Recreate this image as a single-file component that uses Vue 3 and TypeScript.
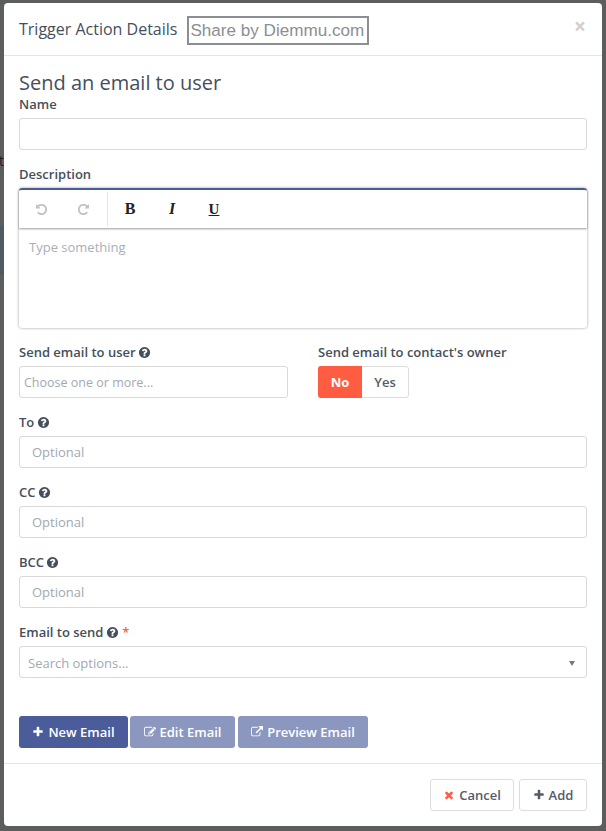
<script setup lang="ts">
const optional: string[] = ['To', 'CC', 'BCC']
const Q = 'M1024 1376v-192q0-14-9-23t-23-9h-192q-14 0-23 9t-9 23v192q0 14 9 23t23 9h192q14 0 23-9t9-23zm256-672q0-88-55.5-163t-138.5-116-170-41q-243 0-371 213-15 24 8 42l132 100q7 6 19 6 16 0 25-12 53-68 86-92 34-24 86-24 48 0 85.5 26t37.5 59q0 38-20 61t-68 45q-63 28-115.5 86.5t-52.5 125.5v36q0 14 9 23t23 9h192q14 0 23-9t9-23q0-19 21.5-49.5t54.5-49.5q32-18 49-28.5t46-35 44.5-48 28-60.5 12.5-81zm384 192q0 209-103 385.5t-279.5 279.5-385.5 103-385.5-103-279.5-279.5-103-385.5 103-385.5 279.5-279.5 385.5-103 385.5 103 279.5 279.5 103 385.5z'
const PLUS = 'M1600 736v192q0 40-28 68t-68 28h-416v416q0 40-28 68t-68 28h-192q-40 0-68-28t-28-68v-416h-416q-40 0-68-28t-28-68v-192q0-40 28-68t68-28h416v-416q0-40 28-68t68-28h192q40 0 68 28t28 68v416h416q40 0 68 28t28 68z'
const TIMES = 'M1490 1322q0 40-28 68l-136 136q-28 28-68 28t-68-28l-294-294-294 294q-28 28-68 28t-68-28l-136-136q-28-28-28-68t28-68l294-294-294-294q-28-28-28-68t28-68l136-136q28-28 68-28t68 28l294 294 294-294q28-28 68-28t68 28l136 136q28 28 28 68t-28 68l-294 294 294 294q28 28 28 68z'
const EDIT = 'M888 1184l116-116-152-152-116 116v56h96v96h56zm440-720q-16-16-33 1l-350 350q-17 17-1 33t33-1l350-350q17-17 1-33zm80 594v190q0 119-84.5 203.5t-203.5 84.5h-832q-119 0-203.5-84.5t-84.5-203.5v-832q0-119 84.5-203.5t203.5-84.5h832q63 0 117 25 15 7 18 23 3 17-9 29l-49 49q-14 14-32 8-23-6-45-6h-832q-66 0-113 47t-47 113v832q0 66 47 113t113 47h832q66 0 113-47t47-113v-126q0-13 9-22l64-64q15-15 35-7t20 29zm-96-738l288 288-672 672h-288v-288zm444 132l-92 92-288-288 92-92q28-28 68-28t68 28l152 152q28 28 28 68t-28 68z'
const LINK = 'M1408 928v320q0 119-84.5 203.5t-203.5 84.5h-832q-119 0-203.5-84.5t-84.5-203.5v-832q0-119 84.5-203.5t203.5-84.5h704q14 0 23 9t9 23v64q0 14-9 23t-23 9h-704q-66 0-113 47t-47 113v832q0 66 47 113t113 47h832q66 0 113-47t47-113v-320q0-14 9-23t23-9h64q14 0 23 9t9 23zm384-864v512q0 26-19 45t-45 19-45-19l-176-176-652 652q-10 10-23 10t-23-10l-114-114q-10-10-10-23t10-23l652-652-176-176q-19-19-19-45t19-45 45-19h512q26 0 45 19t19 45z'
const UNDO = 'M1664 896q0 156-61 298t-164 245-245 164-298 61q-172 0-327-72.5t-264-204.5q-7-10-6.5-22.5t8.5-20.5l137-138q10-9 25-9 16 2 23 12 73 95 179 147t225 52q104 0 198.5-40.5t163.5-109.5 109.5-163.5 40.5-198.5-40.5-198.5-109.5-163.5-163.5-109.5-198.5-40.5q-98 0-188 35.5t-160 101.5l137 138q31 30 14 69-17 40-59 40h-448q-26 0-45-19t-19-45v-448q0-42 40-59 39-17 69 14l130 129q107-101 244.5-156.5t284.5-55.5q156 0 298 61t245 164 164 245 61 298z'
</script>

<template>
  <div class="backdrop">
    <span class="under-text">t</span>
    <span class="under-band"></span>
    <section class="modal">
      <header class="head">
        <h2 class="head-title">Trigger Action Details</h2>
        <span class="share">Share by Diemmu.com</span>
        <span class="close">×</span>
      </header>

      <div class="body">
        <h3 class="title">Send an email to user</h3>

        <div class="field-name">
          <label class="lbl">Name</label>
          <div class="input"></div>
        </div>

        <div class="field-desc">
          <label class="lbl">Description</label>
          <div class="editor">
            <div class="toolbar">
              <div class="tool-group">
                <button class="tool"><svg class="t-ic" viewBox="0 0 1792 1792"><path :d="UNDO" /></svg></button>
                <button class="tool"><svg class="t-ic flip" viewBox="0 0 1792 1792"><path :d="UNDO" /></svg></button>
              </div>
              <div class="tool-group fmt">
                <button class="tool txt">B</button>
                <button class="tool txt it">I</button>
                <button class="tool txt un">U</button>
              </div>
            </div>
            <div class="editor-area">Type something</div>
          </div>
        </div>

        <div class="two-col">
          <div class="col-left">
            <label class="lbl">Send email to user <svg class="q" viewBox="0 0 1792 1792"><path :d="Q" /></svg></label>
            <div class="input ph small">Choose one or more...</div>
          </div>
          <div class="col-right">
            <label class="lbl">Send email to contact's owner</label>
            <div class="toggle">
              <span class="tg-no">No</span>
              <span class="tg-yes">Yes</span>
            </div>
          </div>
        </div>

        <div v-for="o in optional" :key="o" class="field-opt">
          <label class="lbl">{{ o }} <svg class="q" viewBox="0 0 1792 1792"><path :d="Q" /></svg></label>
          <div class="input ph">Optional</div>
        </div>

        <div class="field-opt">
          <label class="lbl">Email to send <svg class="q" viewBox="0 0 1792 1792"><path :d="Q" /></svg> <span class="req">*</span></label>
          <div class="input ph select">
            <span>Search options...</span>
            <i class="caret"></i>
          </div>
        </div>

        <div class="actions">
          <button class="btn primary"><svg class="b-ic" viewBox="0 0 1792 1792"><path :d="PLUS" /></svg>New Email</button>
          <button class="btn muted edit"><svg class="b-ic" viewBox="0 0 1792 1792"><path :d="EDIT" /></svg>Edit Email</button>
          <button class="btn muted preview"><svg class="b-ic" viewBox="0 0 1792 1792"><path :d="LINK" /></svg>Preview Email</button>
        </div>
      </div>

      <footer class="foot">
        <button class="btn ghost cancel"><svg class="b-ic red" viewBox="0 0 1792 1792"><path :d="TIMES" /></svg>Cancel</button>
        <button class="btn ghost add"><svg class="b-ic" viewBox="0 0 1792 1792"><path :d="PLUS" /></svg>Add</button>
      </footer>
    </section>
  </div>
</template>

<style>
html, body { margin: 0; padding: 0; background: #5c5d5f; }
</style>

<style scoped>
* { box-sizing: border-box; }
.backdrop {
  position: relative;
  width: 606px;
  height: 831px;
  padding: 3px 4px 5px;
  background: #5c5d5f;
  font-family: "Open Sans", sans-serif;
  color: #454f5b;
  overflow: hidden;
}
.under-text {
  position: absolute;
  left: -1px;
  top: 152px;
  font-size: 14px;
  line-height: 18px;
  color: #222;
}
.under-band {
  position: absolute;
  left: 0;
  top: 226px;
  width: 4px;
  height: 49px;
  background: #4f5a62;
}
.modal {
  position: relative;
  width: 598px;
  height: 823px;
  background: #fff;
  border-radius: 4px;
  display: flex;
  flex-direction: column;
}
.head {
  height: 53px;
  flex: none;
  border-bottom: 1px solid #e5e5e5;
  display: flex;
  align-items: flex-start;
  padding: 13px 15px 0;
}
.head-title {
  margin: 0;
  font-size: 16px;
  font-weight: 400;
  line-height: 26px;
  color: #454f5b;
}
.share {
  margin-left: 10px;
  width: 182px;
  height: 29px;
  border: 2px solid #8b8e92;
  font-family: "Liberation Sans", sans-serif;
  font-size: 17.1px;
  line-height: 26px;
  padding-left: 1px;
  color: #8b8e92;
  white-space: nowrap;
}
.close {
  margin-left: auto;
  margin-top: -3px;
  font-size: 21px;
  line-height: 26px;
  font-weight: 700;
  color: #cfcfcf;
  padding-right: 1px;
}
.body {
  flex: 1;
  padding: 15px 15px 0;
  display: flex;
  flex-direction: column;
}
.title {
  margin: 0 0 3px;
  font-size: 20px;
  font-weight: 400;
  line-height: 24px;
  color: #454f5b;
}
.lbl {
  display: block;
  font-size: 13px;
  font-weight: 600;
  line-height: 14px;
  margin: -1px 0 7px;
  color: #454f5b;
  white-space: nowrap;
}
.input {
  height: 32px;
  border: 1px solid #d9d9d9;
  border-radius: 3px;
  background: #fff;
}
.field-desc { margin-top: 18px; }
.editor {
  height: 140px;
  border-top: 2px solid #4a5d9a;
  border-radius: 3px;
  box-shadow: 0 0 3px rgba(0, 0, 0, 0.4);
  display: flex;
  flex-direction: column;
}
.toolbar {
  height: 38px;
  flex: none;
  display: flex;
  box-shadow: 0 1px 2px rgba(0, 0, 0, 0.4);
}
.tool-group { display: flex; height: 34px; margin-top: 2px; border-right: 1px solid #e4e4e4; padding: 0 3px 0 1px; }
.tool-group.fmt { border-right: 0; padding: 0 0 0 1px; }
.tool {
  width: 42px;
  height: 34px;
  border: 0;
  background: none;
  padding: 0;
  display: flex;
  align-items: center;
  justify-content: center;
}
.t-ic { width: 13px; height: 13px; fill: #c2c2c2; }
.flip { transform: scaleX(-1); }
.txt {
  font-family: "Liberation Serif", serif;
  font-size: 16px;
  font-weight: 700;
  color: #222;
}
.it { font-style: italic; }
.un { text-decoration: underline; font-size: 15px; }
.editor-area {
  flex: 1;
  padding: 10px 10px;
  font-size: 13px;
  line-height: 18px;
  color: #a7afbb;
}
.two-col { display: flex; margin-top: 18px; }
.col-left { width: 269px; }
.col-right { margin-left: 30px; }
.ph {
  font-size: 13px;
  line-height: 30px;
  padding-left: 12px;
  color: #a2a9b1;
}
.small { padding-left: 4px; font-size: 12.5px; line-height: 32px; }
.toggle {
  display: flex;
  width: 91px;
  height: 32px;
  border: 1px solid #ddd;
  border-radius: 3px;
  font-size: 13px;
  font-weight: 600;
  line-height: 30px;
  text-align: center;
}
.tg-no {
  width: 44px;
  margin: -1px 0 -1px -1px;
  line-height: 32px;
  background: #ff5c42;
  color: #fff;
  border-radius: 3px 0 0 3px;
  font-weight: 700;
}
.tg-yes { flex: 1; color: #555c68; }
.field-opt { margin-top: 18px; }
.q { width: 13px; height: 13px; margin-left: -1px; fill: #454f5b; vertical-align: -2px; }
.req { color: #ff5c42; }
.select {
  display: flex;
  align-items: center;
  justify-content: space-between;
  padding: 2px 11px 0 8px;
}
.caret {
  width: 0;
  height: 0;
  border-left: 3.5px solid transparent;
  border-right: 3.5px solid transparent;
  border-top: 5px solid #777;
}
.actions { display: flex; margin-top: 38px; }
.btn {
  height: 32px;
  border: 0;
  border-radius: 3px;
  font-family: "Open Sans", sans-serif;
  font-size: 13px;
  font-weight: 600;
  padding: 0;
  display: flex;
  align-items: center;
  justify-content: center;
  white-space: nowrap;
}
.b-ic { width: 12px; height: 12px; margin-right: 4px; fill: currentColor; }
.primary { width: 109px; background: #4a5d9a; color: #fff; }
.muted { background: #8c97bf; color: #fff; }
.edit { width: 105px; margin-left: 2px; }
.preview { width: 130px; margin-left: 3px; }
.foot {
  height: 63px;
  flex: none;
  border-top: 1px solid #e5e5e5;
  display: flex;
  justify-content: flex-end;
  align-items: flex-start;
  padding: 15px 15px 0;
}
.ghost { background: #fff; border: 1px solid #ddd; color: #555c68; }
.cancel { width: 84px; }
.add { width: 68px; margin-left: 5px; }
.red { fill: #ff5c42; }
</style>
